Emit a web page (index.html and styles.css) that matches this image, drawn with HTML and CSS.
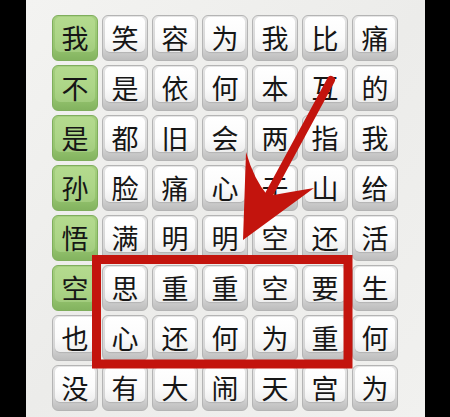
FILE: index.html
```html
<!DOCTYPE html>
<html lang="zh">
<head>
<meta charset="utf-8">
<link rel="stylesheet" href="styles.css">
</head>
<body>
<div class="screen">
  <div class="panel">
    <div class="grid">
      <div class="tile green"><span class="face">我</span></div>
      <div class="tile"><span class="face">笑</span></div>
      <div class="tile"><span class="face">容</span></div>
      <div class="tile"><span class="face">为</span></div>
      <div class="tile"><span class="face">我</span></div>
      <div class="tile"><span class="face">比</span></div>
      <div class="tile"><span class="face">痛</span></div>

      <div class="tile green"><span class="face">不</span></div>
      <div class="tile"><span class="face">是</span></div>
      <div class="tile"><span class="face">依</span></div>
      <div class="tile"><span class="face">何</span></div>
      <div class="tile"><span class="face">本</span></div>
      <div class="tile"><span class="face">互</span></div>
      <div class="tile"><span class="face">的</span></div>

      <div class="tile green"><span class="face">是</span></div>
      <div class="tile"><span class="face">都</span></div>
      <div class="tile"><span class="face">旧</span></div>
      <div class="tile"><span class="face">会</span></div>
      <div class="tile"><span class="face">两</span></div>
      <div class="tile"><span class="face">指</span></div>
      <div class="tile"><span class="face">我</span></div>

      <div class="tile green"><span class="face">孙</span></div>
      <div class="tile"><span class="face">脸</span></div>
      <div class="tile"><span class="face">痛</span></div>
      <div class="tile"><span class="face">心</span></div>
      <div class="tile"><span class="face">于</span></div>
      <div class="tile"><span class="face">山</span></div>
      <div class="tile"><span class="face">给</span></div>

      <div class="tile green"><span class="face">悟</span></div>
      <div class="tile"><span class="face">满</span></div>
      <div class="tile"><span class="face">明</span></div>
      <div class="tile"><span class="face">明</span></div>
      <div class="tile"><span class="face">空</span></div>
      <div class="tile"><span class="face">还</span></div>
      <div class="tile"><span class="face">活</span></div>

      <div class="tile green"><span class="face">空</span></div>
      <div class="tile"><span class="face">思</span></div>
      <div class="tile"><span class="face">重</span></div>
      <div class="tile"><span class="face">重</span></div>
      <div class="tile"><span class="face">空</span></div>
      <div class="tile"><span class="face">要</span></div>
      <div class="tile"><span class="face">生</span></div>

      <div class="tile"><span class="face">也</span></div>
      <div class="tile"><span class="face">心</span></div>
      <div class="tile"><span class="face">还</span></div>
      <div class="tile"><span class="face">何</span></div>
      <div class="tile"><span class="face">为</span></div>
      <div class="tile"><span class="face">重</span></div>
      <div class="tile"><span class="face">何</span></div>

      <div class="tile"><span class="face">没</span></div>
      <div class="tile"><span class="face">有</span></div>
      <div class="tile"><span class="face">大</span></div>
      <div class="tile"><span class="face">闹</span></div>
      <div class="tile"><span class="face">天</span></div>
      <div class="tile"><span class="face">宫</span></div>
      <div class="tile"><span class="face">为</span></div>
    </div>
  </div>
  <svg class="overlay" width="450" height="417" viewBox="0 0 450 417">
    <rect x="96.5" y="259.5" width="251.5" height="104.5" fill="none" stroke="#c3140d" stroke-width="9"/>
    <line x1="331" y1="80" x2="266" y2="200" stroke="#c3140d" stroke-width="8" stroke-linecap="round"/>
    <path d="M243 240 L246 152 Q254 180 268 196 Q290 192 314 188 Z" fill="#c3140d"/>
  </svg>
</div>
</body>
</html>
```

FILE: styles.css
```css
html, body {
  margin: 0;
  padding: 0;
  background: #000;
}

.screen {
  position: relative;
  width: 450px;
  height: 417px;
  overflow: hidden;
  background: #000;
}

.panel {
  margin-left: 26px;
  width: 399px;
  height: 417px;
  box-sizing: border-box;
  padding: 15px 0 0 26px;
  background: linear-gradient(135deg, #f3f3f1 0%, #ececea 50%, #f1f1ef 100%);
}

.grid {
  display: grid;
  grid-template-columns: repeat(7, 46px);
  grid-auto-rows: 46px;
  column-gap: 4px;
  row-gap: 4px;
}

.tile {
  box-sizing: border-box;
  border: 1px solid #b4b4b4;
  border-radius: 6px;
  background: linear-gradient(to bottom, #e6e6e6 0%, #d6d6d6 70%, #bdbdbd 100%);
  padding: 1px 2px 8px 2px;
  display: flex;
}

.face {
  flex: 1;
  display: flex;
  align-items: center;
  justify-content: center;
  border-radius: 5px;
  background: linear-gradient(to bottom, #ffffff 0%, #fbfbfb 60%, #ededed 100%);
  box-shadow: 0 1px 1px rgba(0,0,0,0.12);
  font-family: "Noto Sans CJK SC", sans-serif;
  font-size: 27px;
  font-weight: 400;
  color: #161616;
  line-height: 1;
  padding-top: 6px;
}

.tile.green {
  border-color: #7fae5c;
  background: linear-gradient(to bottom, #a6cf80 0%, #95c46f 70%, #83b35f 100%);
}

.tile.green .face {
  background: linear-gradient(to bottom, #b4da8e 0%, #acd587 60%, #a2cc7e 100%);
  box-shadow: none;
}

.overlay {
  position: absolute;
  left: 0;
  top: 0;
  pointer-events: none;
}
```
